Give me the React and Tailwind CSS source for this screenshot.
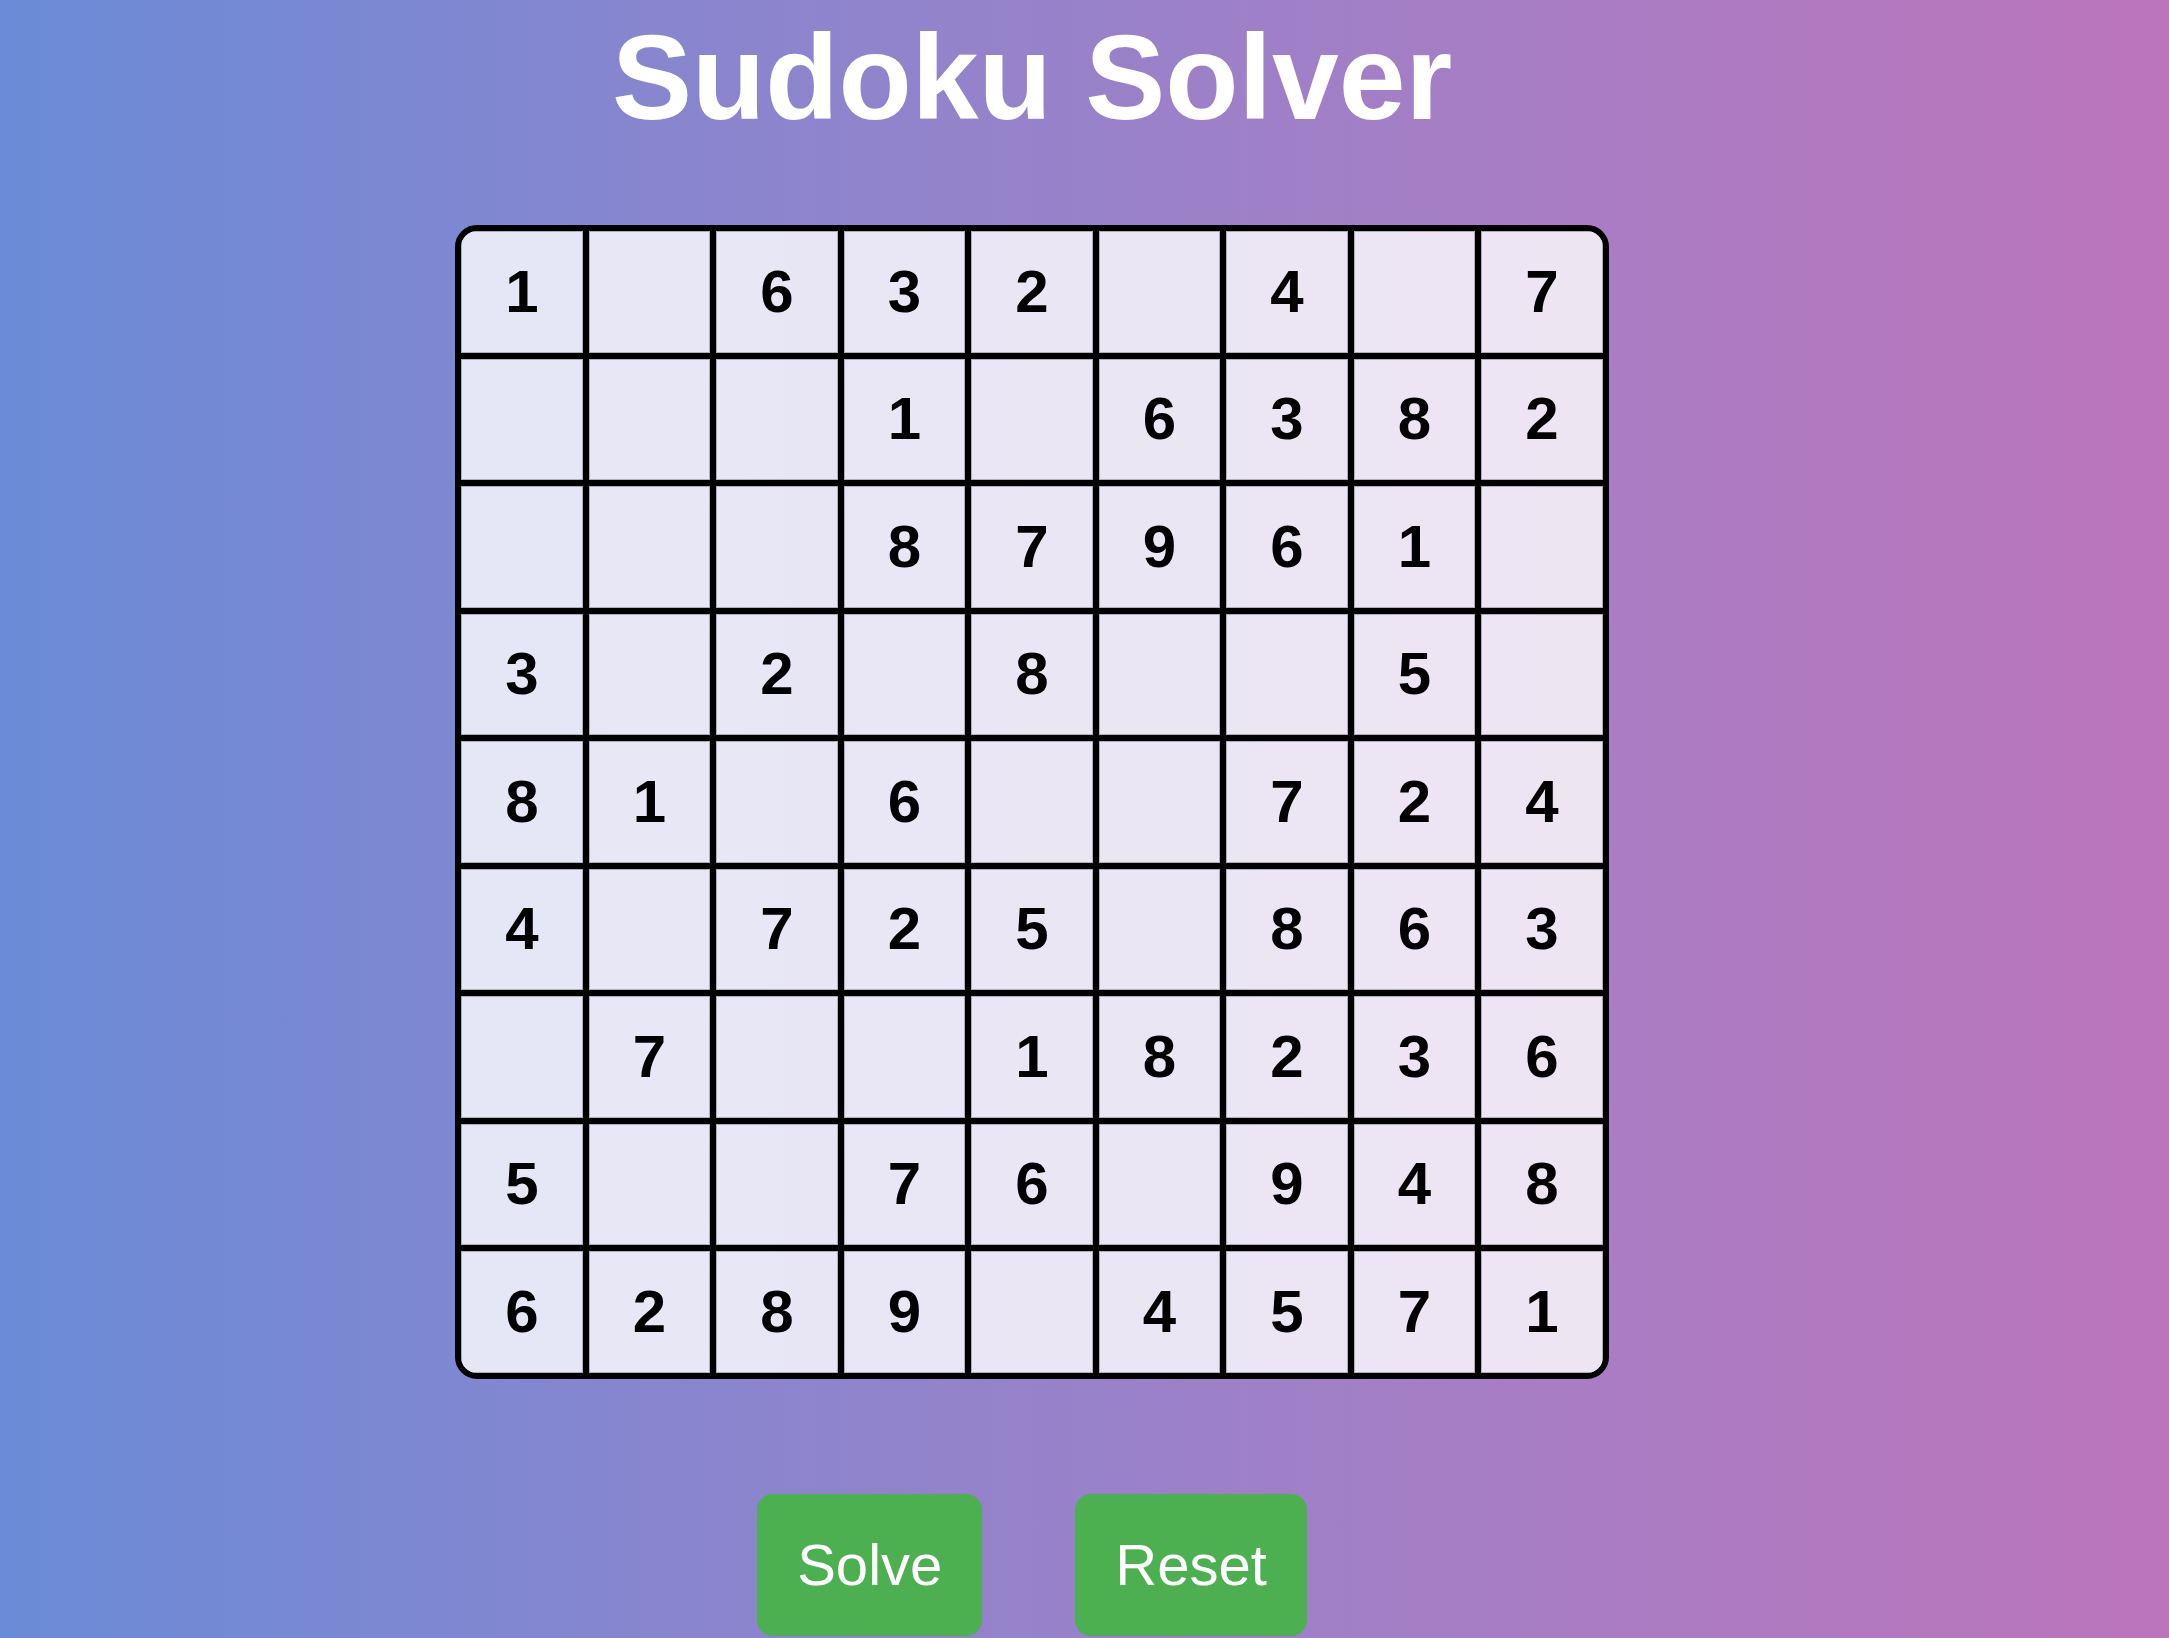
const BOARD = [
  [1, 0, 6, 3, 2, 0, 4, 0, 7],
  [0, 0, 0, 1, 0, 6, 3, 8, 2],
  [0, 0, 0, 8, 7, 9, 6, 1, 0],
  [3, 0, 2, 0, 8, 0, 0, 5, 0],
  [8, 1, 0, 6, 0, 0, 7, 2, 4],
  [4, 0, 7, 2, 5, 0, 8, 6, 3],
  [0, 7, 0, 0, 1, 8, 2, 3, 6],
  [5, 0, 0, 7, 6, 0, 9, 4, 8],
  [6, 2, 8, 9, 0, 4, 5, 7, 1],
];

// Simple sudoku board + two action buttons on a gradient page.
// Cells are translucent so the page gradient shows through them.
const App = () => {
  return (
    <div
      className="min-h-screen w-full bg-gradient-to-r from-[#6a8bd7] to-[#bc75bc] pr-[105px] flex flex-col items-center"
      style={{ fontFamily: '"Liberation Sans", Arial, sans-serif' }}
    >
      <h1 className="mt-[17px] text-[120px] leading-none font-bold text-white">Sudoku Solver</h1>

      <div className="mt-[88px] overflow-hidden rounded-[22px] border-[6px] border-black">
        <div className="grid grid-cols-[repeat(8,127.5px)_121.5px] grid-rows-[repeat(8,127.5px)_121.5px]">
          {BOARD.map((row, r) =>
            row.map((n, c) => (
              <div
                key={`${r}-${c}`}
                className={`border-black ${c < 8 ? 'border-r-[6px]' : ''} ${r < 8 ? 'border-b-[6px]' : ''}`}
              >
                <div className="flex h-full w-full items-center justify-center border border-black/25 bg-white/80 text-[60px] font-bold text-black">
                  {n ? n : ''}
                </div>
              </div>
            ))
          )}
        </div>
      </div>

      <div className="mt-[115px] flex gap-[93px]">
        <button className="h-[142px] rounded-[16px] bg-[#4caf50] px-[40px] text-[58px] text-white">Solve</button>
        <button className="h-[142px] rounded-[16px] bg-[#4caf50] px-[40px] text-[58px] text-white">Reset</button>
      </div>
    </div>
  );
};

export default App;
